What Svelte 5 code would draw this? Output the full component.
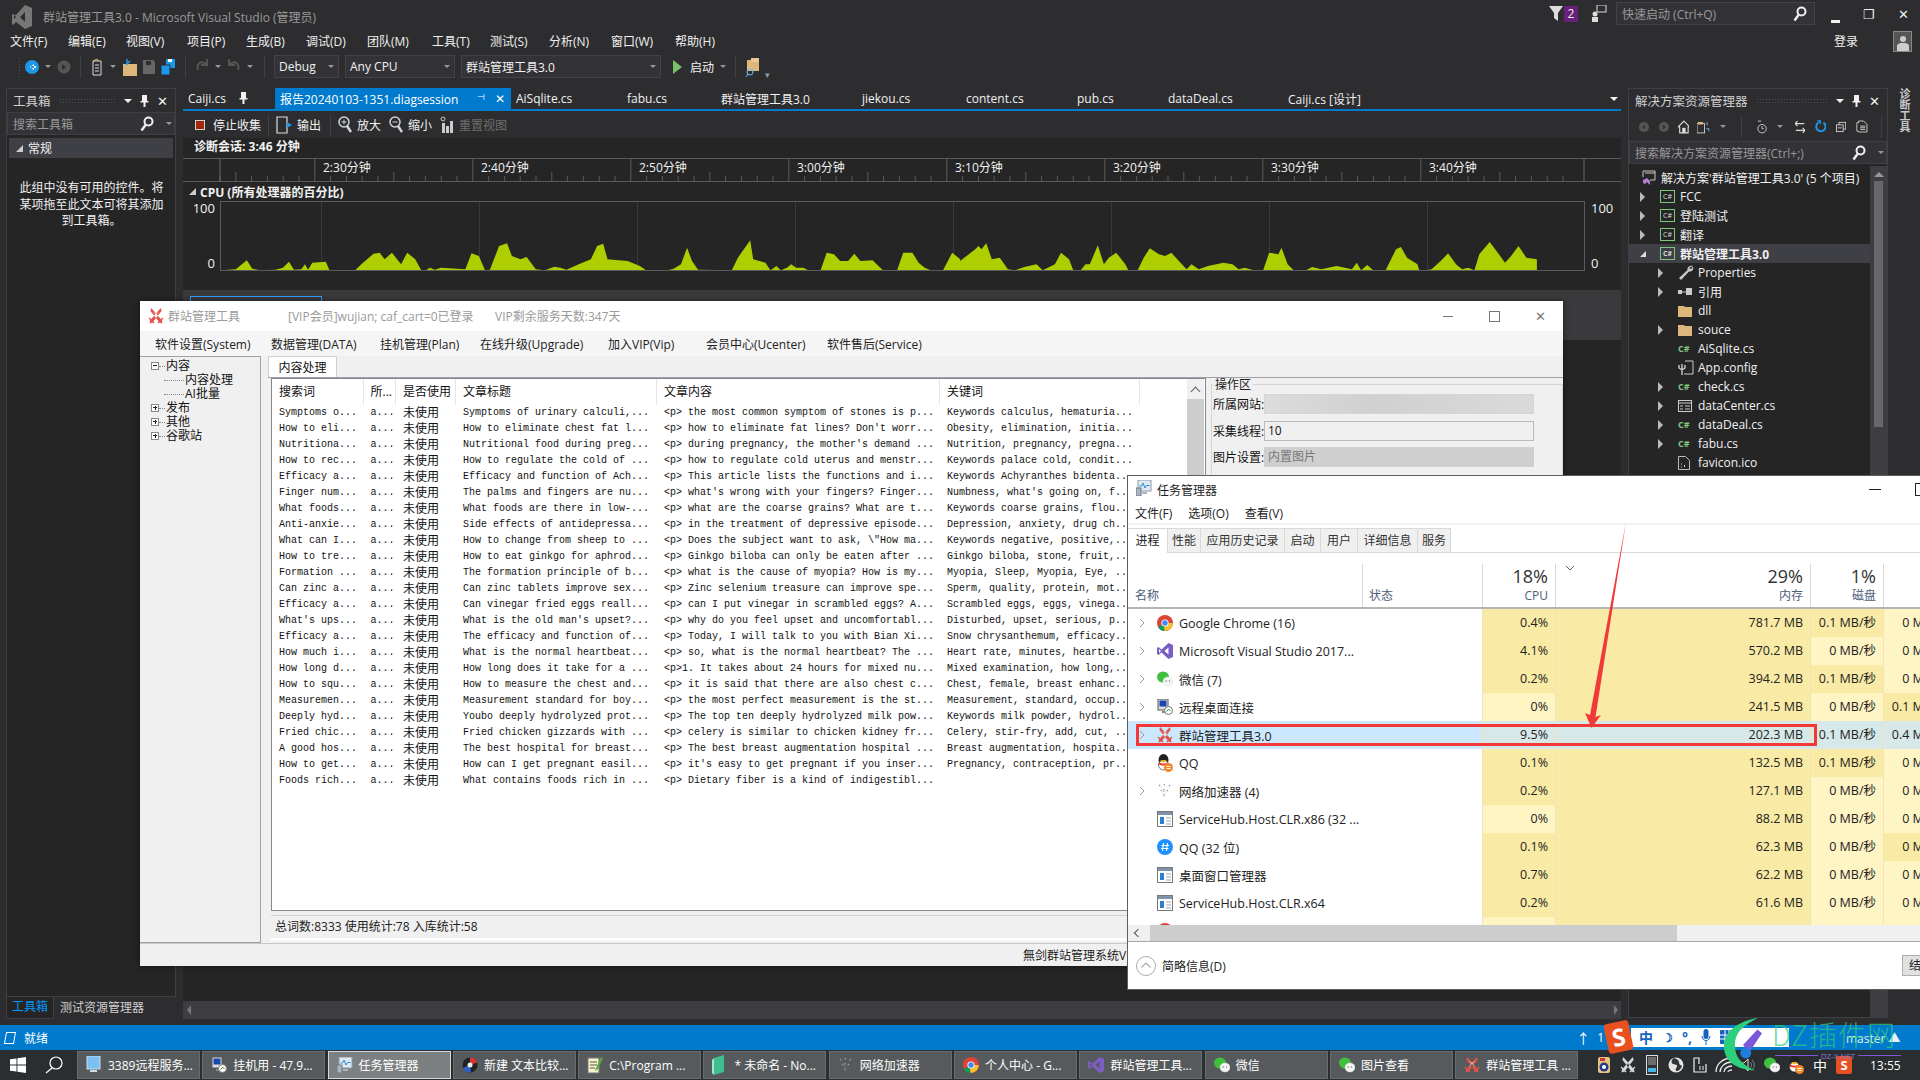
<script>
  const menus = [['文件(F)',58],['编辑(E)',58],['视图(V)',61],['项目(P)',59],['生成(B)',60],['调试(D)',61],['团队(M)',65],['工具(T)',58],['测试(S)',59],['分析(N)',62],['窗口(W)',64],['帮助(H)',60]];
  const docTabs = [['Caiji.cs',92,'pin'],['报告20240103-1351.diagsession',236,'active'],['AiSqlite.cs',111],['fabu.cs',94],['群站管理工具3.0',141],['jiekou.cs',104],['content.cs',111],['pub.cs',91],['dataDeal.cs',120],['Caiji.cs [设计]',140]];
  const times = ['2:30','2:40','2:50','3:00','3:10','3:20','3:30','3:40'];
  const ticks = Array.from({length: 86}, (_, i) => i);

  // chart outline, read off the reference in zoomed coordinates
  const cpuA = [360,808,385,805,403,778,412,803,425,808,450,806,462,800,472,782,480,806,492,805,498,790,503,806,510,785,532,782,538,808,580,808,590,790,610,758,620,755,628,775,640,755,655,790,665,755,678,775,688,808,695,808,702,800,710,806,720,800,760,805,770,757,782,765,792,808,800,806,815,735,828,727,836,765,850,775,860,768,875,805,890,808,905,797,915,800,925,806,945,790,965,775,975,735,985,728,992,775,1010,778,1025,780,1045,795,1055,808,1090,808,1100,803,1112,790,1122,740,1130,780,1140,806,1195,808,1205,770,1225,718,1230,775,1250,785,1258,808,1268,795,1275,808,1285,800,1292,790,1300,800,1312,800,1320,808,1340,808,1350,755,1362,760,1372,780,1385,780,1395,758,1405,780,1425,778,1442,808,1465,808,1475,755,1490,755,1500,785,1510,800,1520,808,1540,808,1555,755,1568,775];
  const cpuB = [0,780,25,745,30,735,35,745,43,727,52,775,65,770,78,805,90,808,105,798,125,790,135,808,155,790,165,755,178,775,185,808,197,808,205,790,212,790,225,733,235,790,243,770,255,755,270,790,275,808,290,808,300,770,310,742,325,760,335,765,345,755,360,785,370,805,378,790,390,805,405,795,430,785,445,790,455,805,465,800,480,808,495,808,505,755,520,760,525,740,535,790,545,808,565,808,575,798,590,805,615,795,640,805,648,785,655,808,665,792,675,808,695,808,712,745,720,738,730,770,747,790,750,808,760,808,770,805,785,780,797,757,810,790,820,805,830,800,840,808,848,760,865,723,880,760,890,785,900,765,912,735,925,770,942,775,942,808];
  let pts = [];
  for (let i = 0; i < cpuA.length; i += 2) pts.push((cpuA[i] / 1.633).toFixed(1) + ',' + (cpuA[i + 1] / 3 - 201).toFixed(1));
  for (let i = 0; i < cpuB.length; i += 2) pts.push((960 + cpuB[i] / 1.633).toFixed(1) + ',' + (cpuB[i + 1] / 3 - 201).toFixed(1));
  const cpuPoints = '220,69 ' + pts.join(' ');

  const solution = [
    {n:'FCC',a:1,i:'proj',d:0},{n:'登陆测试',a:1,i:'proj',d:0},{n:'翻译',a:1,i:'proj',d:0},
    {n:'群站管理工具3.0',a:2,i:'proj',d:0,sel:1},
    {n:'Properties',a:1,i:'wrench',d:1},{n:'引用',a:1,i:'ref',d:1},{n:'dll',a:0,i:'folder',d:1},{n:'souce',a:1,i:'folder',d:1},
    {n:'AiSqlite.cs',a:0,i:'cs',d:1},{n:'App.config',a:0,i:'cfg',d:1},{n:'check.cs',a:1,i:'cs',d:1},{n:'dataCenter.cs',a:1,i:'form',d:1},
    {n:'dataDeal.cs',a:1,i:'cs',d:1},{n:'fabu.cs',a:1,i:'cs',d:1},{n:'favicon.ico',a:0,i:'ico',d:1}
  ];

  const toolMenu = [['软件设置(System)',116],['数据管理(DATA)',109],['挂机管理(Plan)',100],['在线升级(Upgrade)',128],['加入VIP(Vip)',98],['会员中心(Ucenter)',121],['软件售后(Service)',120]];
  const tree = [['minus','内容',0],['','内容处理',1],['','AI批量',1],['plus','发布',0],['plus','其他',0],['plus','谷歌站',0]];
  const rows = [
    ['Symptoms o...','Symptoms of urinary calculi,...','<p> the most common symptom of stones is p...','Keywords calculus, hematuria...'],
    ['How to eli...','How to eliminate chest fat l...',"<p> how to eliminate fat lines? Don't worr...",'Obesity, elimination, initia...'],
    ['Nutritiona...','Nutritional food during preg...',"<p> during pregnancy, the mother's demand ...",'Nutrition, pregnancy, pregna...'],
    ['How to rec...','How to regulate the cold of ...','<p> how to regulate cold uterus and menstr...','Keywords palace cold, condit...'],
    ['Efficacy a...','Efficacy and function of Ach...','<p> This article lists the functions and i...','Keywords Achyranthes bidenta...'],
    ['Finger num...','The palms and fingers are nu...',"<p> what's wrong with your fingers? Finger...","Numbness, what's going on, f..."],
    ['What foods...','What foods are there in low-...','<p> what are the coarse grains? What are t...','Keywords coarse grains, flou...'],
    ['Anti-anxie...','Side effects of antidepressa...','<p> in the treatment of depressive episode...','Depression, anxiety, drug ch...'],
    ['What can I...','How to change from sheep to ...','<p> Does the subject want to ask, \\"How ma...','Keywords negative, positive,...'],
    ['How to tre...','How to eat ginkgo for aphrod...','<p> Ginkgo biloba can only be eaten after ...','Ginkgo biloba, stone, fruit,...'],
    ['Formation ...','The formation principle of b...','<p> what is the cause of myopia? How is my...','Myopia, Sleep, Myopia, Eye, ...'],
    ['Can zinc a...','Can zinc tablets improve sex...','<p> Zinc selenium treasure can improve spe...','Sperm, quality, protein, mot...'],
    ['Efficacy a...','Can vinegar fried eggs reall...','<p> can I put vinegar in scrambled eggs? A...','Scrambled eggs, eggs, vinega...'],
    ["What's ups...","What is the old man's upset?...",'<p> why do you feel upset and uncomfortabl...','Disturbed, upset, serious, p...'],
    ['Efficacy a...','The efficacy and function of...','<p> Today, I will talk to you with Bian Xi...','Snow chrysanthemum, efficacy...'],
    ['How much i...','What is the normal heartbeat...','<p> so, what is the normal heartbeat? The ...','Heart rate, minutes, heartbe...'],
    ['How long d...','How long does it take for a ...','<p>1. It takes about 24 hours for mixed nu...','Mixed examination, how long,...'],
    ['How to squ...','How to measure the chest and...','<p> it is said that there are also chest c...','Chest, female, breast enhanc...'],
    ['Measuremen...','Measurement standard for boy...','<p> the most perfect measurement is the st...','Measurement, standard, occup...'],
    ['Deeply hyd...','Youbo deeply hydrolyzed prot...','<p> The top ten deeply hydrolyzed milk pow...','Keywords milk powder, hydrol...'],
    ['Fried chic...','Fried chicken gizzards with ...','<p> celery is similar to chicken kidney fr...','Celery, stir-fry, add, cut, ...'],
    ['A good hos...','The best hospital for breast...','<p> The best breast augmentation hospital ...','Breast augmentation, hospita...'],
    ['How to get...','How can I get pregnant easil...',"<p> it's easy to get pregnant if you inser...",'Pregnancy, contraception, pr...'],
    ['Foods rich...','What contains foods rich in ...','<p> Dietary fiber is a kind of indigestibl...','']
  ];

  const tmTabs = [['进程',40,'on'],['性能',33],['应用历史记录',84],['启动',36],['用户',37],['详细信息',60],['服务',33]];
  // name, expandable, icon, cpu, mem, disk, net, then which heat cells are the darker shade
  const procs = [
    ['Google Chrome (16)',1,'chrome','0.4%','781.7 MB','0.1 MB/秒','0 MB/秒',1,1,0],
    ['Microsoft Visual Studio 2017...',1,'vs','4.1%','570.2 MB','0 MB/秒','0 MB/秒',1,0,0],
    ['微信 (7)',1,'wechat','0.2%','394.2 MB','0.1 MB/秒','0 MB/秒',1,1,0],
    ['远程桌面连接',1,'rdp','0%','241.5 MB','0 MB/秒','0.1 MB/秒',0,0,1],
    ['群站管理工具3.0',1,'swords','9.5%','202.3 MB','0.1 MB/秒','0.4 MB/秒',1,1,1,'sel'],
    ['QQ',0,'qq','0.1%','132.5 MB','0.1 MB/秒','0 MB/秒',1,1,0],
    ['网络加速器 (4)',1,'net','0.2%','127.1 MB','0 MB/秒','0 MB/秒',1,0,0],
    ['ServiceHub.Host.CLR.x86 (32 ...',0,'app','0%','88.2 MB','0 MB/秒','0 MB/秒',0,0,0],
    ['QQ (32 位)',0,'hash','0.1%','62.3 MB','0 MB/秒','0 MB/秒',1,0,1],
    ['桌面窗口管理器',0,'app','0.7%','62.2 MB','0 MB/秒','0 MB/秒',1,0,0],
    ['ServiceHub.Host.CLR.x64',0,'app','0.2%','61.6 MB','0 MB/秒','0 MB/秒',1,0,0],
    ['',0,'red','','','','',0,0,0]
  ];

  const taskItems = [
    ['3389远程服务...','screen'],['挂机用 - 47.9...','rdp'],['任务管理器','tm','on'],['新建 文本比较...','diff'],['C:\\Program ...','npp'],['* 未命名 - No...','note'],['网络加速器','net'],
    ['个人中心 - G...','chrome'],['群站管理工具...','vs'],['微信','wechat'],['图片查看','wechat'],['群站管理工具 ...','swords']
  ];
  const trayIcons = ['guard','swordsW','phone','globe','note2','wifi','sound','wechat','qq','zh','sogou'];
</script>

{#snippet icon(name)}
  {#if name === 'chrome'}
    <svg viewBox="0 0 16 16" width="16" height="16"><circle cx="8" cy="8" r="8" fill="#db4437"/><path d="M8 8 1 12a8 8 0 0 0 7 4l3.500-6z" fill="#0f9d58"/><path d="M8 8h7.800A8 8 0 0 1 8 16l-1-2z" fill="#fbc02d"/><circle cx="8" cy="8" r="3.600" fill="#fff"/><circle cx="8" cy="8" r="2.700" fill="#4285f4"/></svg>
  {:else if name === 'vs'}
    <svg viewBox="0 0 16 16" width="16" height="16"><path d="M11.500 0 16 2v12l-4.500 2L4.500 9.500 1.500 12 0 11V5l1.500-1 3 2.500zM11.500 4.500 7.500 8l4 3.500zM2 6v4l2-2z" fill="#7b5fc4"/></svg>
  {:else if name === 'wechat'}
    <svg viewBox="0 0 16 16" width="16" height="16"><ellipse cx="6" cy="6" rx="6" ry="5.500" fill="#3ec03e"/><ellipse cx="11" cy="10.500" rx="5" ry="4.500" fill="#f4f4f4" stroke="#ddd" stroke-width=".5"/><circle cx="9.300" cy="10" r=".8" fill="#888"/><circle cx="12.500" cy="10" r=".8" fill="#888"/></svg>
  {:else if name === 'rdp'}
    <svg viewBox="0 0 16 16" width="16" height="16"><rect x="1" y="0" width="10" height="11" fill="#ddd" stroke="#555"/><rect x="2.500" y="1.500" width="7" height="6" fill="#1746b0"/><rect x="5" y="12" width="5" height="2" fill="#888"/><circle cx="11.500" cy="11.500" r="4" fill="#fff" stroke="#777"/><path d="M9.500 12.500l2-2 2 1" stroke="#2a8a2a" fill="none"/></svg>
  {:else if name === 'swords' || name === 'swordsW'}
    <svg viewBox="0 0 16 16" width="16" height="16"><path d="M3 0 5 2l9 10.500.5 3-3-1L2.500 3zM13 0l-2 2L2 12.500 1.500 15.500l3-1 9-11.500z" fill={name === 'swords' ? '#e0524a' : '#d8d8d8'}/><path d="M1 10l5 5M15 10l-5 5" stroke={name === 'swords' ? '#e0524a' : '#d8d8d8'} stroke-width="1.400"/><path d="M6 4.500 10 8.500M10 4.500 6 8.500" stroke="#fff" stroke-width=".7"/></svg>
  {:else if name === 'qq'}
    <svg viewBox="0 0 16 18" width="16" height="18"><ellipse cx="6.500" cy="6" rx="5" ry="6" fill="#222"/><ellipse cx="6.500" cy="11" rx="5" ry="5" fill="#fff" stroke="#222" stroke-width=".6"/><path d="M2 8.500c3 1.500 6 1.500 9 0l.5 2c-3 1.200-7 1.200-10 0z" fill="#e33"/><path d="M3 6.800 6.500 8.500 10 6.800 6.500 6z" fill="#f5b400"/><circle cx="11.500" cy="13.500" r="4.500" fill="#f58a29"/><path d="M9.500 12.500h4M9.500 14.500h4" stroke="#fff"/></svg>
  {:else if name === 'net'}
    <svg viewBox="0 0 16 16" width="16" height="16"><path d="M2 2l2 2M7 1l1 2M13 2l-2 2M4 7l2 2M11 7 9 9M7 6v3M7 11v3" stroke="#9a9aa8" stroke-width="1.400" stroke-dasharray="1.500 1"/></svg>
  {:else if name === 'app'}
    <svg viewBox="0 0 16 16" width="16" height="16"><rect x=".5" y=".5" width="15" height="15" fill="#fff" stroke="#777"/><rect x="1" y="1" width="14" height="3" fill="#7f94a8"/><rect x="3" y="6" width="4" height="7" fill="#2a7fd0"/><path d="M9 7h5M9 10h5M9 13h5" stroke="#9aa"/></svg>
  {:else if name === 'hash'}
    <svg viewBox="0 0 16 16" width="16" height="16"><circle cx="8" cy="8" r="8" fill="#1e90ff"/><path d="M6.500 4 5.500 12M10.500 4l-1 8M4.500 6.500h7.500M4 9.500h7.500" stroke="#fff" stroke-width="1.100"/></svg>
  {:else if name === 'red'}
    <svg viewBox="0 0 16 16" width="16" height="16"><circle cx="8" cy="8" r="8" fill="#e53935"/></svg>
  {:else if name === 'screen'}
    <svg viewBox="0 0 16 18" width="16" height="18"><rect x="1" y="0" width="13" height="13" fill="#7ac0f0" stroke="#cde"/><rect x="4" y="14" width="7" height="2" fill="#cde"/></svg>
  {:else if name === 'tm'}
    <svg viewBox="0 0 16 16" width="16" height="16"><rect x="2" y="0" width="13" height="11" fill="#dfe8f0" stroke="#8a9aa8"/><path d="M3.500 6h2l1.500-3 2 5 1.500-2.500h3" stroke="#2a8ad0" fill="none"/><rect x="0" y="8" width="5" height="8" fill="#a8b4be" stroke="#778"/><rect x="6" y="12" width="5" height="2" fill="#a8b4be"/></svg>
  {:else if name === 'diff'}
    <svg viewBox="0 0 16 16" width="16" height="16"><circle cx="8" cy="8" r="7.500" fill="#222"/><path d="M8 .5a7.500 7.500 0 0 1 7 5L8 8z" fill="#d33"/><path d="M1 11a7.500 7.500 0 0 0 8 4.400L8 8z" fill="#2a62c8"/><circle cx="8" cy="8" r="2.500" fill="#eee"/></svg>
  {:else if name === 'npp'}
    <svg viewBox="0 0 16 18" width="16" height="18"><rect x="1" y="2" width="11" height="15" fill="#f8f3c8" stroke="#777"/><path d="M3 6h7M3 9h7M3 12h5" stroke="#555"/><path d="M14 1 9 12l-1 3 3-2 5-11z" fill="#5aa83a"/></svg>
  {:else if name === 'note'}
    <svg viewBox="0 0 14 20" width="14" height="20"><path d="M2 3 12 0v17L2 20z" fill="#3fbf8f"/><path d="M2 3 0 5v13l2 2z" fill="#a6e6cc"/></svg>
  {:else if name === 'guard'}
    <svg viewBox="0 0 16 20" width="16" height="20"><rect x="2" y="2" width="12" height="16" rx="2" fill="#e8c480"/><circle cx="8" cy="12" r="4.500" fill="#263a8a"/><circle cx="8" cy="12" r="2" fill="#fff"/><rect x="4" y="3" width="5" height="3" fill="#c33"/></svg>
  {:else if name === 'phone'}
    <svg viewBox="0 0 12 20" width="12" height="20"><rect x=".5" y=".5" width="11" height="19" fill="#333" stroke="#ddd"/><path d="M2 3h8M2 5h8M2 7h8M2 9h8" stroke="#aaa"/><rect x="2" y="13" width="8" height="4" fill="#49b6e8"/></svg>
  {:else if name === 'globe'}
    <svg viewBox="0 0 16 16" width="16" height="16"><circle cx="8" cy="8" r="7.500" fill="#e4e4e4"/><path d="M6 1C3 3 3 6 5 7s4 0 4 2-2 2-1 5c3 0 5-2 6-5-2-1-3-2-3-4S9 2 6 1z" fill="#333"/></svg>
  {:else if name === 'note2'}
    <svg viewBox="0 0 16 16" width="16" height="16"><path d="M2 1v14h12V7M2 1h5v6" fill="none" stroke="#eee" stroke-width="1.200"/><path d="M8 9v4M11 9v4" stroke="#eee"/></svg>
  {:else if name === 'wifi'}
    <svg viewBox="0 0 18 18" width="18" height="18"><path d="M1 16C1 8 8 2 17 2M5 16c0-5 5-10 12-10M9 16c0-3 3-6 8-6M13 16c0-1 2-2 4-2" fill="none" stroke="#e8e8e8" stroke-width="1.300"/></svg>
  {:else if name === 'sound'}
    <svg viewBox="0 0 16 16" width="16" height="16"><path d="M1 6h3l4-4v12l-4-4H1z" fill="none" stroke="#ddd"/><path d="M10 5c2 2 2 4 0 6M12 3c3 3 3 7 0 10" fill="none" stroke="#888"/></svg>
  {:else if name === 'zh'}
    <span class="tray-zh">中</span>
  {:else if name === 'sogou'}
    <span class="tray-s">S</span>
  {/if}
{/snippet}

{#snippet search(color)}
  <svg viewBox="0 0 14 16" width="14" height="16"><circle cx="8.500" cy="5.500" r="4" fill="none" stroke={color} stroke-width="2"/><path d="M5.500 9 1.500 14.500" stroke={color} stroke-width="2.400"/></svg>
{/snippet}

{#snippet pin(c)}
  <svg viewBox="0 0 9 14" width="9" height="14"><path d="M2 1h5v6h1.500v1.500h-3V13h-2V8.500h-3V7H2z" fill={c}/></svg>
{/snippet}

{#snippet panelHead(title)}
  <div class="panel-head">
    <span class="panel-title">{title}</span>
    <span class="grip"></span>
    <span class="dn"></span>
    {@render pin('#f1f1f1')}
    <span class="panel-x">✕</span>
  </div>
{/snippet}

{#snippet projIcon(kind)}
  {#if kind === 'proj'}
    <span class="proj">C#</span>
  {:else if kind === 'cs'}
    <span class="cs">C#</span>
  {:else if kind === 'wrench'}
    <svg viewBox="0 0 16 16" width="16" height="16"><path d="M15 1c-3-1-6 1-5.500 4L1 13l2 2 8-8.500c3 .5 5-2 4-5L13 4l-2-1z" fill="#c8c8c8"/></svg>
  {:else if kind === 'ref'}
    <svg viewBox="0 0 14 14" width="14" height="14"><rect x="0" y="5" width="4" height="4" fill="#ccc"/><rect x="8" y="3" width="6" height="7" fill="#ccc"/><path d="M4 7h4" stroke="#ccc"/></svg>
  {:else if kind === 'folder'}
    <svg viewBox="0 0 14 12" width="14" height="12"><path d="M0 1h6l1 1h7v10H0z" fill="#dcb67a"/></svg>
  {:else if kind === 'cfg'}
    <svg viewBox="0 0 16 16" width="16" height="16"><path d="M7 1h8v13H6" fill="none" stroke="#ccc"/><path d="M4 4v5M1 5v3l3 2 3-2V5M4 10v5" fill="none" stroke="#ccc" stroke-width="1.400"/></svg>
  {:else if kind === 'form'}
    <svg viewBox="0 0 14 12" width="14" height="12"><rect x=".5" y=".5" width="13" height="11" fill="none" stroke="#ccc"/><path d="M0 3h14M2 6h3M7 6h5M2 9h3M7 9h5" stroke="#ccc"/></svg>
  {:else if kind === 'ico'}
    <svg viewBox="0 0 12 14" width="12" height="14"><path d="M.5.5h7l4 4v9H.5z" fill="none" stroke="#bbb"/><path d="M3 8h1M3 11h1M6 9l1 1-1 1" stroke="#ccc"/></svg>
  {/if}
{/snippet}

<div class="desktop">
  <div class="vs">
    <header class="titlebar">
      <svg class="vs-logo" viewBox="0 0 20 24" width="20" height="24"><path d="M13 0 20 3v18l-7 3-9-7-3 3-1-1V9l4 1zM13 7 8 12l5 5zM2 10v4l2-2z" fill="#777"/></svg>
      <span class="title-text">群站管理工具3.0 - Microsoft Visual Studio (管理员)</span>
      <span class="spacer"></span>
      <div class="title-right">
        <svg viewBox="0 0 14 16" width="14" height="16"><path d="M0 0h14L9 7v8L5 12V7z" fill="#ddd"/></svg>
        <span class="badge">2</span>
        <svg class="feedback" viewBox="0 0 16 18" width="16" height="18"><rect x="6" y="0" width="9" height="7" fill="none" stroke="#ddd"/><circle cx="4" cy="9" r="2.500" fill="#ddd"/><rect x="1" y="12" width="6" height="5" fill="#ddd"/></svg>
        <div class="quick">快速启动 (Ctrl+Q){@render search('#f1f1f1')}</div>
        <span class="win-ctl"><i class="c-min"></i></span>
        <span class="win-ctl">❐</span>
        <span class="win-ctl">✕</span>
      </div>
    </header>

    <nav class="menubar">
      {#each menus as m}<span style="width:{m[1]}px">{m[0]}</span>{/each}
      <span class="spacer"></span>
      <span class="login">登录</span>
      <span class="avatar"><svg viewBox="0 0 12 16" width="12" height="16"><circle cx="6" cy="4" r="3" fill="#ccc"/><path d="M0 16V10l3-2h6l3 2v6z" fill="#ccc"/></svg></span>
    </nav>

    <div class="toolbar">
      <span class="grip-v"></span>
      <svg class="t1" viewBox="0 0 14 16" width="14" height="16"><circle cx="7" cy="8" r="7" fill="#1c97ea"/><path d="M9 5 5 8l4 3zM5 7h6v2H5z" fill="#fff"/></svg>
      <span class="dn-s"></span>
      <svg viewBox="0 0 14 16" width="14" height="16"><circle cx="7" cy="8" r="6.500" fill="#555"/><path d="M5 5l4 3-4 3z" fill="#2d2d30"/></svg>
      <span class="t-sep"></span>
      <svg viewBox="0 0 14 18" width="14" height="18"><path d="M3 3h8v14H3z" fill="none" stroke="#ddd"/><path d="M5 7h4M5 10h4M5 13h4" stroke="#ddd"/><path d="M3 3 7 1l2 2" stroke="#e8b06a" fill="none"/></svg>
      <span class="dn-s"></span>
      <svg viewBox="0 0 16 18" width="16" height="18"><path d="M1 6h14v12H1z" fill="#dcb67a"/><path d="M5 1v5l3-3" stroke="#1c97ea" fill="none" stroke-width="1.500"/></svg>
      <svg viewBox="0 0 14 16" width="14" height="16"><path d="M1 1h10l2 2v12H1z" fill="#666"/><rect x="4" y="2" width="5" height="4" fill="#2d2d30"/></svg>
      <svg viewBox="0 0 16 18" width="16" height="18"><path d="M6 1h9v9H6z" fill="#1c97ea"/><path d="M1 7h9v10H1z" fill="#1c97ea" stroke="#2d2d30"/><rect x="8" y="1" width="4" height="3" fill="#fff"/></svg>
      <span class="t-sep"></span>
      <svg viewBox="0 0 14 18" width="14" height="18"><path d="M3 12C1 6 6 2 11 6M12 1v6H6" fill="none" stroke="#555" stroke-width="2"/></svg>
      <span class="dn-s"></span>
      <svg viewBox="0 0 14 18" width="14" height="18"><path d="M11 12C13 6 8 2 3 6M2 1v6h6" fill="none" stroke="#555" stroke-width="2"/></svg>
      <span class="dn-s"></span>
      <span class="t-sep"></span>
      <div class="combo c-debug">Debug<i></i></div>
      <div class="combo c-cpu">Any CPU<i></i></div>
      <div class="combo c-proj">群站管理工具3.0<i></i></div>
      <span class="play"></span>
      <span class="start">启动</span>
      <span class="dn-s"></span>
      <span class="t-sep t-sep2"></span>
      <svg viewBox="0 0 16 20" width="16" height="20"><path d="M2 3h12v11H2z" fill="#dcb67a"/><path d="M6 1h8v4H6z" fill="#e8c896"/><circle cx="5" cy="15" r="3" fill="none" stroke="#75beff"/><path d="M3 17l-2 3" stroke="#75beff"/></svg>
      <span class="over">▾</span>
    </div>

    <div class="dock">
      <div class="left-col">
        <aside class="toolbox">
          {@render panelHead('工具箱')}
          <div class="search"><span>搜索工具箱</span><b>{@render search('#f1f1f1')}</b><i class="dn-s"></i></div>
          <div class="general"><span class="tri"></span>常规</div>
          <p class="empty">此组中没有可用的控件。将某项拖至此文本可将其添加到工具箱。</p>
        </aside>
        <div class="bottom-tabs"><span class="on">工具箱</span><span>测试资源管理器</span></div>
      </div>

      <main class="center">
        <div class="doc-tabs">
          {#each docTabs as t}
            <div class="doc-tab" class:active={t[2] === 'active'} style="width:{t[1]}px">
              <span>{t[0]}</span>
              {#if t[2] === 'pin'}<em class="tab-pin">{@render pin('#f1f1f1')}</em>{/if}
              {#if t[2] === 'active'}<em class="tab-act"><span class="mini-pin">⊣</span><span>✕</span></em>{/if}
            </div>
          {/each}
          <span class="spacer"></span>
          <span class="dn tab-dn"></span>
        </div>
        <div class="diag-bar">
          <span class="stop"></span><span>停止收集</span>
          <span class="t-sep"></span>
          <svg viewBox="0 0 16 18" width="16" height="18"><path d="M1 1h10v16H1z" fill="none" stroke="#ddd" stroke-width="1.200"/><path d="M4 9h7V6l5 3-5 3V9" fill="#1c97ea"/></svg><span class="mr">输出</span>
          <span class="t-sep"></span>
          <svg viewBox="0 0 14 18" width="14" height="18"><circle cx="6" cy="6" r="5" fill="none" stroke="#cfd4da" stroke-width="1.500"/><path d="M9 10l4 6" stroke="#cfd4da" stroke-width="2.500"/><path d="M3.500 6h5M6 3.500v5" stroke="#cfd4da"/></svg><span class="mr2">放大</span>
          <svg viewBox="0 0 14 18" width="14" height="18"><circle cx="6" cy="6" r="5" fill="none" stroke="#cfd4da" stroke-width="1.500"/><path d="M9 10l4 6" stroke="#cfd4da" stroke-width="2.500"/><path d="M3.500 6h5" stroke="#cfd4da"/></svg><span class="mr2">缩小</span>
          <svg viewBox="0 0 14 18" width="14" height="18"><circle cx="3" cy="3" r="2" fill="none" stroke="#ccc"/><rect x="2" y="7" width="3" height="10" fill="#ccc"/><rect x="6" y="10" width="3" height="7" fill="#ccc"/><rect x="10" y="5" width="3" height="12" fill="#ccc"/></svg><span class="disabled">重置视图</span>
        </div>
        <div class="session">诊断会话: 3:46 分钟</div>
        <div class="ruler">
          <svg class="ruler-ticks" width="1438" height="23">
            {#each ticks as k}
              <line x1={37 + k * 15.8} x2={37 + k * 15.8} y1={k % 10 === 6 ? 0 : k % 5 === 1 ? 13 : 17} y2="23" stroke="#5a5a5a"/>
            {/each}
            <line x1="37" x2="37" y1="0" y2="23" stroke="#6a6a6a"/>
            <line x1="1401" x2="1401" y1="0" y2="23" stroke="#6a6a6a"/>
          </svg>
          {#each times as t, i}<span class="time" style="left:{140 + i * 158}px">{t}分钟</span>{/each}
        </div>
        <div class="cpu-head"><span class="tri"></span>CPU (所有处理器的百分比)</div>
        <div class="chart-row">
          <div class="axis left"><span>100</span><span>0</span></div>
          <div class="plot">
            <svg width="1364" height="69" viewBox="220 0 1364 69">
              {#each times as _, i}<line x1={321.500 + i * 158} x2={321.500 + i * 158} y1="0" y2="69" stroke="#3a3a3c"/>{/each}
              <polygon points={cpuPoints} fill="#aece00"/>
              <line x1="220" x2="1537" y1="68.500" y2="68.500" stroke="#6f7d3a"/>
            </svg>
          </div>
          <div class="axis right"><span>100</span><span>0</span></div>
        </div>
        <div class="chart-gap"></div>
        <div class="graph-tabs"><span class="graph-tab"></span></div>
        <div class="doc-fill"></div>
        <div class="doc-scroll"><span class="arr-l"></span><span class="spacer"></span><span class="arr-r"></span></div>
      </main>

      <aside class="explorer">
        {@render panelHead('解决方案资源管理器')}
        <div class="ex-tools">
          <svg viewBox="0 0 14 14" width="14" height="14"><circle cx="7" cy="7" r="6" fill="#555"/><path d="M8 4 5 7l3 3z" fill="#2d2d30"/></svg>
          <svg viewBox="0 0 14 14" width="14" height="14"><circle cx="7" cy="7" r="6" fill="#555"/><path d="M6 4l3 3-3 3z" fill="#2d2d30"/></svg>
          <svg viewBox="0 0 14 14" width="14" height="14"><path d="M7 0 14 7h-2v7H2V7H0z" fill="none" stroke="#ddd" stroke-width="1.300"/><rect x="5" y="8" width="4" height="6" fill="#ddd"/></svg>
          <svg viewBox="0 0 15 14" width="15" height="14"><rect x="0" y="3" width="9" height="11" fill="none" stroke="#ddd"/><rect x="1" y="1" width="6" height="3" fill="#dcb67a"/><path d="M12 1v4M11 9h3v3" stroke="#75beff" fill="none"/></svg>
          <span class="dn-s"></span>
          <span class="t-sep"></span>
          <svg class="gap" viewBox="0 0 12 16" width="12" height="16"><circle cx="6" cy="10" r="5" fill="none" stroke="#ddd"/><path d="M6 7v3h2M1 1h4" stroke="#ddd" fill="none"/></svg>
          <span class="dn-s"></span>
          <svg class="gap" viewBox="0 0 12 14" width="12" height="14"><path d="M3 0 0 3l3 3M0 3h11M9 8l3 3-3 3M12 11H1" fill="none" stroke="#ddd" stroke-width="1.400"/></svg>
          <svg class="gap" viewBox="0 0 13 15" width="13" height="15"><path d="M10 3a5.500 5.500 0 1 1-6 0" fill="none" stroke="#1c97ea" stroke-width="2.400"/><path d="M2 0h5v5" fill="#1c97ea"/></svg>
          <svg class="gap" viewBox="0 0 12 12" width="12" height="12"><rect x="3.500" y=".5" width="8" height="8" fill="none" stroke="#ddd"/><rect x=".5" y="3.500" width="8" height="8" fill="#2d2d30" stroke="#ddd"/><path d="M2 7h5" stroke="#ddd"/></svg>
          <svg class="gap" viewBox="0 0 14 15" width="14" height="15"><path d="M1 3h2V1h6l4 4v9H3v-1H1z" fill="none" stroke="#ddd"/><path d="M5 7h6M5 9h6M5 11h6" stroke="#ddd"/></svg>
          <span class="t-sep"></span>
        </div>
        <div class="search ex-search"><span>搜索解决方案资源管理器(Ctrl+;)</span><b>{@render search('#f1f1f1')}</b><i class="dn-s"></i></div>
        <div class="ex-body">
          <div class="ex-tree">
            <div class="ex-row root">
              <svg viewBox="0 0 14 16" width="14" height="16"><path d="M1 1h12v9H8M1 1v6M3 3h10" fill="none" stroke="#ccc"/><path d="M5 8l3 3v4l-3-3-2 2-2-1v-3l2-1z" fill="#b180d7"/></svg>
              解决方案'群站管理工具3.0' (5 个项目)
            </div>
            {#each solution as s}
              <div class="ex-row" class:sel={s.sel} class:deep={s.d === 1}>
                <span class="arrow">{#if s.a === 1}<i class="open"></i>{:else if s.a === 2}<i class="down"></i>{/if}</span>
                <span class="ex-ico">{@render projIcon(s.i)}</span>
                <span class="ex-name">{s.n}</span>
              </div>
            {/each}
          </div>
          <div class="ex-sb"><span class="up"></span><span class="thumb"></span></div>
        </div>
      </aside>

      <div class="strip"><span>诊断工具</span></div>
    </div>

    <footer class="statusbar">
      <span class="status-box"></span><span>就绪</span>
      <span class="spacer"></span>
      <span class="up-arrow">↑</span><span class="stat-num">1</span>
      <span class="master">master ▲</span>
    </footer>
  </div>

  <div class="taskbar">
    <svg class="winlogo" viewBox="0 0 16 16" width="16" height="16"><path d="M0 2.300 6.500 1.400V7.600H0zM7.400 1.300 16 0V7.600H7.400zM0 8.400h6.500v6.200L0 13.700zM7.400 8.400H16V16L7.400 14.700z" fill="#fff"/></svg>
    <svg class="tb-search" viewBox="0 0 18 18" width="18" height="18"><circle cx="11" cy="7" r="6" fill="none" stroke="#fff" stroke-width="1.200"/><path d="M7 12 1 17" stroke="#fff" stroke-width="1.200"/></svg>
    {#each taskItems as t}
      <div class="task-btn" class:on={t[2] === 'on'}>
        <span class="task-ico">{@render icon(t[1])}</span>
        <span>{t[0]}</span>
      </div>
    {/each}
    <div class="tray">
      {#each trayIcons as t}<span class="tray-i">{@render icon(t)}</span>{/each}
      <span class="clock">13:55</span>
    </div>
  </div>

  <!-- floating window: group manager -->
  <section class="tool-win">
    <div class="tw-title">
      <span class="tw-icon">{@render icon('swords')}</span>
      <span class="tw-name">群站管理工具</span>
      <span class="tw-vip">[VIP会员]wujian; caf_cart=0已登录</span>
      <span class="tw-days">VIP剩余服务天数:347天</span>
      <span class="spacer"></span>
      <span class="tw-ctl min"></span><span class="tw-ctl max"></span><span class="tw-ctl x">✕</span>
    </div>
    <div class="tw-menu">
      {#each toolMenu as m}<span style="width:{m[1]}px">{m[0]}</span>{/each}
    </div>
    <div class="tw-body">
      <div class="tree">
        {#each tree as n}
          <div class="tree-row" class:child={n[2]}>
            {#if n[0]}<i class="box {n[0]}"></i><b class="dot"></b>{/if}
            {#if n[2]}<b class="dot long"></b>{/if}
            <span>{n[1]}</span>
          </div>
        {/each}
      </div>
      <div class="tw-pane">
        <div class="tw-tabs"><span>内容处理</span></div>
        <div class="tw-main">
          <div class="listview">
            <div class="lv-inner">
              <div class="lv-row lv-head">
                <span>搜索词</span><span>所...</span><span>是否使用</span><span>文章标题</span><span>文章内容</span><span>关键词</span>
              </div>
              {#each rows as r}
                <div class="lv-row">
                  <span class="mono">{r[0]}</span><span class="mono">a...</span><span>未使用</span><span class="mono">{r[1]}</span><span class="mono">{r[2]}</span><span class="mono">{r[3]}</span>
                </div>
              {/each}
            </div>
            <div class="lv-sb"><i></i><span></span></div>
          </div>
          <div class="ops">
            <fieldset>
              <legend>操作区</legend>
              <div class="op-row"><label>所属网站:</label><div class="op-field blur"></div></div>
              <div class="op-row"><label>采集线程:</label><div class="op-field">10</div></div>
              <div class="op-row"><label>图片设置:</label><div class="op-field grey">内置图片</div></div>
            </fieldset>
          </div>
        </div>
        <div class="tw-count">总词数:8333 使用统计:78 入库统计:58</div>
      </div>
    </div>
    <div class="tw-status">無剑群站管理系统V</div>
  </section>

  <!-- floating window: task manager -->
  <section class="tm">
    <div class="tm-title">
      <span class="tm-icon">{@render icon('tm')}</span>
      <span>任务管理器</span>
      <span class="spacer"></span>
      <span class="tm-min"></span><span class="tm-max"></span>
    </div>
    <div class="tm-menu"><span>文件(F)</span><span>选项(O)</span><span>查看(V)</span></div>
    <div class="tm-tabs">
      {#each tmTabs as t}<span class:on={t[2] === 'on'} style="width:{t[1]}px">{t[0]}</span>{/each}
    </div>
    <div class="tm-cols">
      <div class="col c-name"><span class="lab">名称</span></div>
      <div class="col c-state"><span class="lab">状态</span></div>
      <div class="col c-num"><b>18%</b><span class="lab">CPU</span></div>
      <div class="col c-mem"><svg class="chev" viewBox="0 0 10 6" width="10" height="6"><path d="M1 1l4 4 4-4" fill="none" stroke="#4c607a"/></svg><b>29%</b><span class="lab">内存</span></div>
      <div class="col c-num"><b>1%</b><span class="lab">磁盘</span></div>
      <div class="col c-num"><b></b><span class="lab"></span></div>
    </div>
    <div class="tm-rows">
      {#each procs as p}
        <div class="tm-row" class:sel={p[10] === 'sel'}>
          <div class="pname">
            <span class="chevr">{#if p[1]}<svg viewBox="0 0 6 10" width="6" height="10"><path d="M1 1l4 4-4 4" fill="none" stroke="#999"/></svg>{/if}</span>
            <span class="p-ico">{@render icon(p[2])}</span>
            <span>{p[0]}</span>
          </div>
          <div class="pstate"></div>
          <div class="num" class:dark={p[7]}>{p[3]}</div>
          <div class="num dark">{p[4]}</div>
          <div class="num" class:dark={p[8]}>{p[5]}</div>
          <div class="num" class:dark={p[9]}>{p[6]}</div>
        </div>
      {/each}
    </div>
    <div class="tm-hs"><i></i><span></span></div>
    <div class="tm-foot">
      <svg viewBox="0 0 20 20" width="20" height="20"><circle cx="10" cy="10" r="9.500" fill="none" stroke="#aaa"/><path d="M5.500 11.500 10 7l4.500 4.500" fill="none" stroke="#aaa" stroke-width="1.200"/></svg>
      <span>简略信息(D)</span>
      <span class="spacer"></span>
      <span class="tm-end">结束任务(E)</span>
    </div>
  </section>

  <!-- annotations on top of the screenshot -->
  <div class="red-box"></div>
  <svg class="red-arrow" width="60" height="220" viewBox="0 0 60 220"><path d="M56 2 25.500 197 31 195 21.500 208 15 193 20 195z" fill="#f03a3a"/></svg>

  <div class="sogou">
    <span class="sogou-s">S</span>
    <div class="sogou-bar">
      <span>中</span><span class="moon">☽</span><span>°,</span>
      <svg viewBox="0 0 10 16" width="10" height="16"><rect x="2.500" y="0" width="5" height="10" rx="2.500" fill="#1565c0"/><path d="M1 7c0 6 8 6 8 0M5 12v4" fill="none" stroke="#1565c0"/></svg>
      <svg viewBox="0 0 14 14" width="14" height="14"><rect width="14" height="14" rx="1" fill="#1565c0"/><path d="M0 5h14M0 9h14M5 0v14M9 0v14" stroke="#fff"/></svg>
    </div>
  </div>
  <div class="watermark">
    <svg class="wm-c" viewBox="0 0 50 62" width="46" height="56"><path d="M42 2C18 6 4 18 4 34s14 26 34 26c-14-6-22-14-22-28S26 10 42 2z" fill="#2cd07a"/><path d="M25 32 41 15l5 4-14 21z" fill="#7a58d8"/><circle cx="28" cy="41" r="6" fill="#1c7fe0"/></svg>
    <span class="wm-text">DZ插件网</span>
    <span class="wm-sub"><i></i>DZ-X.NET<i></i></span>
  </div>
</div>

<style>
  :global(body) { margin: 0; background: #2d2d30; overflow: hidden; }

  .desktop {
    position: relative;
    width: 1920px;
    height: 1080px;
    overflow: hidden;
    font-family: "Open Sans", "Noto Sans CJK SC", sans-serif;
    font-size: 12px;
    color: #f1f1f1;
  }

  .spacer { flex: 1; }

  .vs { display: flex; flex-direction: column; height: 1050px; background: #2d2d30; }

  .titlebar { height: 33px; display: flex; align-items: center; padding-left: 12px; }
  .title-right { display: flex; align-items: center; margin-top: -6px; }
  .vs-logo { margin-right: 11px; }
  .title-text { color: #999; }
  .badge { background: #68217a; color: #eee; width: 14px; height: 16px; text-align: center; line-height: 16px; margin: 0 13px 0 1px; }
  .feedback { margin-right: 9px; }
  .quick {
    width: 199px; height: 23px; background: #333337; border: 1px solid #434346; color: #999;
    display: flex; align-items: center; justify-content: space-between; padding: 0 7px 0 5px; box-sizing: border-box;
    margin-right: 3px;
  }
  .win-ctl { width: 34px; text-align: center; color: #f1f1f1; font-size: 13px; position: relative; }
  .c-min { display: inline-block; width: 9px; height: 3px; background: #f1f1f1; vertical-align: -4px; }

  .menubar { height: 16px; display: flex; align-items: center; padding-left: 10px; padding-right: 8px; }
  .login { margin-right: 35px; }
  .avatar { width: 17px; height: 19px; background: #555; border: 1px solid #888; display: flex; justify-content: center; align-items: flex-end; }

  .toolbar { height: 39px; display: flex; align-items: center; padding-left: 18px; gap: 4px; box-sizing: border-box; padding-bottom: 4px; }
  .grip-v { width: 3px; height: 20px; background-image: radial-gradient(#555 30%, transparent 35%); background-size: 3px 3px; }
  .dn-s { width: 0; height: 0; border-left: 3px solid transparent; border-right: 3px solid transparent; border-top: 3px solid #999; margin: 0 2px; }
  .t-sep { width: 1px; height: 22px; background: #3f3f46; margin: 0 5px; }
  .t-sep2 { margin-left: 3px; }
  .combo {
    height: 23px; background: #333337; border: 1px solid #434346; box-sizing: border-box; margin-right: 2px;
    display: flex; align-items: center; justify-content: space-between; padding: 0 4px;
    color: #f1f1f1;
  }
  .combo i { width: 0; height: 0; border-left: 3px solid transparent; border-right: 3px solid transparent; border-top: 3px solid #999; }
  .c-debug { width: 65px; }
  .c-cpu { width: 110px; }
  .c-proj { width: 200px; }
  .play { width: 0; height: 0; border-left: 9px solid #75c069; border-top: 7px solid transparent; border-bottom: 7px solid transparent; margin-left: 6px; margin-right: 4px; }
  .over { color: #999; font-size: 9px; align-self: flex-end; margin-bottom: 3px; }

  .dock { height: 937px; display: flex; }

  .left-col { width: 170px; margin-left: 6px; height: 931px; flex: none; display: flex; flex-direction: column; }
  .toolbox {
    width: 170px; border: 1px solid #3f3f46;
    background: #252526; box-sizing: border-box; height: 909px; display: flex; flex-direction: column;
  }
  .bottom-tabs { height: 22px; display: flex; align-items: center; }
  .bottom-tabs span { padding: 0 6px; line-height: 22px; color: #d0d0d0; }
  .bottom-tabs .on { color: #0097fb; background: #252526; border: 1px solid #3f3f46; border-top: none; box-sizing: border-box; height: 22px; width: 48px; line-height: 20px; padding: 0 5px; }
  .panel-head { height: 23px; display: flex; align-items: center; padding: 0 5px 0 6px; gap: 8px; background: #2d2d30; flex: none; }
  .panel-title { color: #d0d0d0; font-size: 12.500px; white-space: nowrap; }
  .grip { flex: 1; height: 5px; background-image: radial-gradient(#4d4d52 40%, transparent 45%); background-size: 3px 3px; }
  .dn { width: 0; height: 0; border-left: 4px solid transparent; border-right: 4px solid transparent; border-top: 4px solid #f1f1f1; }
  .panel-x { font-size: 13px; color: #f1f1f1; width: 13px; }
  .search {
    height: 23px; flex: none; background: #333337; display: flex; align-items: center; padding-left: 5px;
    color: #999; border: 1px solid #3f3f46; box-sizing: border-box; margin: 0;
  }
  .search span { flex: 1; white-space: nowrap; }
  .search b { display: flex; width: 24px; }
  .general { height: 20px; margin: 3px 2px 0 2px; background: #3f3f46; display: flex; align-items: center; padding-left: 7px; gap: 5px; flex: none; }
  .tri { width: 0; height: 0; border-bottom: 7px solid #ccc; border-left: 7px solid transparent; }
  .empty { margin: 22px 10px 0 11px; line-height: 16.500px; color: #f1f1f1; text-align: center; font-size: 12px; }

  .center { width: 1438px; margin-left: 7px; display: flex; flex-direction: column; height: 931px; background: #252526; }
  .doc-tabs { height: 21px; flex: none; display: flex; background: #2d2d30; }
  .doc-tab { display: flex; align-items: center; padding-left: 5px; box-sizing: border-box; flex: none; position: relative; white-space: nowrap; }
  .doc-tab.active { background: #007acc; color: #fff; }
  .tab-pin { position: absolute; left: 56px; top: 3px; display: flex; }
  .tab-act { position: absolute; right: 6px; top: 2px; display: flex; gap: 10px; font-style: normal; }
  .mini-pin { font-size: 9px; }
  .tab-dn { align-self: center; margin-right: 3px; }
  .diag-bar { height: 27px; flex: none; border-top: 2px solid #007acc; display: flex; align-items: center; padding-left: 12px; background: #2d2d30; gap: 5px; }
  .diag-bar .t-sep { margin: 0 2px; }
  .stop { width: 10px; height: 10px; background: #a1260d; border: 1px solid #d0d0d0; box-sizing: border-box; margin-right: 3px; }
  .mr { margin-right: 2px; }
  .mr2 { margin-right: 3px; }
  .disabled { color: #6d6d6d; }
  .session { height: 20px; flex: none; font-weight: 700; padding-left: 11px; line-height: 18px; }
  .ruler { height: 24px; flex: none; position: relative; border-top: 1px solid #5a5a5a; border-bottom: 1px solid #5a5a5a; box-sizing: border-box; }
  .ruler-ticks { position: absolute; left: 0; top: 0; }
  .time { position: absolute; top: -1px; }
  .cpu-head { height: 19px; flex: none; font-weight: 700; display: flex; align-items: center; gap: 4px; padding-left: 6px; }
  .chart-row { display: flex; height: 70px; flex: none; }
  .axis { display: flex; flex-direction: column; justify-content: space-between; font-size: 13px; }
  .axis.left { width: 37px; text-align: right; padding-right: 5px; box-sizing: border-box; }
  .axis.right { padding-left: 6px; }
  .axis span { line-height: 16px; margin-top: -1px; }
  .plot { width: 1365px; height: 70px; border: 1px solid #5a5a5a; box-sizing: border-box; overflow: hidden; }
  .plot svg { display: block; margin-left: -1px; }
  .chart-gap { height: 19px; flex: none; }
  .graph-tabs { height: 50px; flex: none; background: #3a3a3d; padding: 6px 0 0 7px; box-sizing: border-box; }
  .graph-tab { display: block; width: 132px; height: 40px; border: 1px solid #3399ff; box-sizing: border-box; }
  .doc-fill { flex: 1; }
  .doc-scroll { height: 18px; flex: none; background: #3e3e42; display: flex; align-items: center; padding: 0 3px 0 4px; }
  .arr-l { width: 0; height: 0; border-right: 4px solid #777; border-top: 5px solid transparent; border-bottom: 5px solid transparent; }
  .arr-r { width: 0; height: 0; border-left: 4px solid #777; border-top: 5px solid transparent; border-bottom: 5px solid transparent; }

  .explorer {
    width: 260px; margin-left: 7px; background: #252526; border: 1px solid #3f3f46; box-sizing: border-box;
    height: 930px; display: flex; flex-direction: column;
  }
  .ex-tools { height: 29px; flex: none; background: #2d2d30; display: flex; align-items: center; padding-left: 9px; gap: 8px; }
  .ex-tools .gap { margin-left: 2px; }
  .ex-search { margin-bottom: 2px; }
  .ex-body { flex: 1; display: flex; min-height: 0; }
  .ex-tree { flex: 1; padding-top: 2px; }
  .ex-row { height: 19px; display: flex; align-items: center; white-space: nowrap; position: relative; }
  .ex-row.root { padding-left: 13px; gap: 5px; }
  .arrow { width: 20px; margin-left: 11px; display: flex; flex: none; }
  .arrow .open { width: 0; height: 0; border-left: 5px solid #bbb; border-top: 5px solid transparent; border-bottom: 5px solid transparent; position: relative; }
  .arrow .down { width: 0; height: 0; border-bottom: 6px solid #ddd; border-left: 6px solid transparent; }
  .ex-row.deep .arrow { margin-left: 29px; }
  .ex-row.sel { background: #3f3f46; font-weight: 700; }
  .ex-ico { width: 20px; display: flex; align-items: center; flex: none; }
  .proj { width: 13px; height: 11px; border: 1px solid #7ec67a; color: #ddd; font-size: 7px; line-height: 11px; text-align: center; }
  .cs { color: #7ec67a; font-size: 9px; font-weight: 700; }
  .ex-sb { width: 17px; background: #3e3e42; flex: none; display: flex; flex-direction: column; align-items: center; }
  .ex-sb .up { margin-top: 6px; width: 0; height: 0; border-left: 5px solid transparent; border-right: 5px solid transparent; border-bottom: 5px solid #999; }
  .ex-sb .thumb { width: 9px; height: 246px; margin-top: 4px; background: #686868; }

  .strip { width: 29px; flex: none; position: relative; }
  .strip span { position: absolute; left: 8px; top: 0; writing-mode: vertical-rl; font-weight: 700; font-size: 11px; color: #c8c8c8; }

  .statusbar { height: 25px; background: #007acc; display: flex; align-items: center; color: #fff; padding-left: 5px; }
  .status-box { width: 10px; height: 12px; border: 1px solid #fff; box-sizing: border-box; transform: skewX(-10deg); margin-right: 9px; }
  .up-arrow { font-size: 14px; margin-right: 7px; }
  .stat-num { margin-right: 316px; }
  .master { position: absolute; left: 1846px; top: 1029px; color: #fff; opacity: .9; }

  .taskbar { height: 30px; background: #2b2e30; display: flex; align-items: center; position: relative; }
  .winlogo { margin-left: 10px; }
  .tb-search { margin-left: 19px; margin-right: 14px; }
  .task-btn {
    width: 123px; height: 28px; margin-right: 2.300px; background: #565a5c; border: 1px solid #686c6e; box-sizing: border-box;
    display: flex; align-items: center; padding-left: 8px; gap: 4px; color: #fff; white-space: nowrap; overflow: hidden;
  }
  .task-btn.on { background: #7d8081; border-color: #d8d8d8; }
  .task-ico { width: 18px; height: 20px; display: flex; align-items: center; flex: none; }
  .tray { display: flex; align-items: center; position: absolute; left: 1592px; top: 0; height: 30px; }
  .tray-i { width: 24px; display: flex; justify-content: center; align-items: center; }
  .tray-zh { color: #fff; font-size: 14px; }
  .tray-s { width: 16px; height: 18px; background: #e8501f; color: #fff; font-weight: 700; text-align: center; line-height: 18px; font-size: 13px; border-radius: 2px; }
  .clock { margin-left: 14px; color: #fff; }

  .tool-win {
    position: absolute; left: 140px; top: 301px; width: 1423px; height: 665px;
    background: #f0f0f0; color: #111; display: flex; flex-direction: column;
    box-shadow: 0 0 6px rgba(0,0,0,.5);
  }
  .tw-title { height: 30px; background: #fff; display: flex; align-items: center; padding-left: 8px; flex: none; }
  .tw-icon { width: 16px; height: 16px; margin-right: 4px; }
  .tw-name { color: #9a9a9a; width: 120px; }
  .tw-vip { color: #9a9a9a; width: 207px; }
  .tw-days { color: #9a9a9a; }
  .tw-ctl { width: 46px; height: 30px; display: flex; align-items: center; justify-content: center; position: relative; color: #777; }
  .tw-ctl.min::after { content: ""; width: 10px; height: 1px; background: #777; }
  .tw-ctl.max::after { content: ""; width: 9px; height: 9px; border: 1px solid #777; }
  .tw-ctl.x { font-size: 13px; }
  .tw-menu { height: 25px; background: #f5f5f5; display: flex; align-items: center; padding-left: 15px; flex: none; }
  .tw-menu span { white-space: nowrap; color: #222; }
  .tw-body { height: 587px; flex: none; display: flex; }
  .tree { width: 121px; height: 587px; flex: none; box-sizing: border-box; border: 1px solid #a0a0a8; border-left: none; padding: 2px 0 0 11px; background: #f0f0f0; }
  .tree-row { height: 14px; display: flex; align-items: center; line-height: 14px; color: #111; }
  .tree-row.child { padding-left: 13px; }
  .box { width: 8px; height: 8px; border: 1px solid #888; box-sizing: border-box; position: relative; background: #fff; flex: none; }
  .box::before { content: ""; position: absolute; left: 1px; top: 2px; width: 4px; height: 1px; background: #222; }
  .box.plus::after { content: ""; position: absolute; left: 2.500px; top: 1px; width: 1px; height: 4px; background: #222; }
  .dot { width: 6px; border-top: 1px dotted #888; margin-right: 1px; flex: none; }
  .dot.long { width: 20px; }
  .tw-pane { flex: 1; padding-left: 7px; display: flex; flex-direction: column; min-width: 0; }
  .tw-tabs { height: 22px; flex: none; border-bottom: 1px solid #a0a0a8; box-sizing: border-box; }
  .tw-tabs span { display: inline-block; width: 69px; height: 21px; background: #fff; border: 1px solid #d0d0d0; border-bottom: none; text-align: center; line-height: 21px; box-sizing: border-box; }
  .tw-main { display: flex; height: 533px; flex: none; }
  .listview { width: 935px; background: #fff; border: 1px solid #828790; box-sizing: border-box; display: flex; margin-left: 3px; flex: none; }
  .lv-inner { flex: 1; overflow: hidden; }
  .lv-row {
    display: grid; grid-template-columns: 91.500px 32.500px 60px 201px 283px 200px;
    height: 16px; align-items: center; white-space: nowrap; color: #111;
  }
  .lv-row span { padding-left: 7px; overflow: hidden; line-height: 16px; }
  .lv-head { height: 26px; }
  .lv-head span { border-right: 1px solid #e5e5e5; height: 26px; line-height: 26px; box-sizing: border-box; }
  .mono { font-family: "Liberation Mono", monospace; font-size: 10px; }
  .lv-sb { width: 17px; background: #f0f0f0; margin-right: 1px; flex: none; display: flex; flex-direction: column; align-items: center; }
  .lv-sb i { width: 6px; height: 6px; border-left: 1px solid #606060; border-top: 1px solid #606060; transform: rotate(45deg); margin: 9px 0 4px; }
  .lv-sb span { width: 17px; flex: 1; background: #cdcdcd; }
  .ops { flex: 1; padding: 0 0 0 5px; }
  fieldset { border: 1px solid #d5d5d5; padding: 0 0 0 1px; margin: 0; height: 300px; }
  legend { padding: 0 2px; margin-left: 0; color: #222; font-size: 12px; line-height: 13px; }
  .op-row { display: flex; align-items: center; height: 26.500px; }
  .op-row label { width: 51px; flex: none; white-space: nowrap; font-size: 12px; }
  .op-field { width: 270px; height: 20px; background: #f0f0f0; border: 1px solid #bbb; box-sizing: border-box; line-height: 18px; padding-left: 3px; }
  .op-field.blur { background: linear-gradient(90deg, #dcdcdc, #d0d0d0 40%, #dadada); border-color: #d5d5d5; }
  .op-field.grey { background: #cfcfcf; color: #777; border-color: #d0d0d0; }
  .tw-count { margin-top: 4px; margin-left: 3px; border-top: 1px solid #d5d5d5; height: 22px; flex: none; line-height: 22px; padding-left: 4px; color: #222; box-shadow: 0 3px 0 #fff; width: 935px; }
  .tw-status { flex: 1; border-top: 1px solid #c8c8c8; padding-left: 883px; line-height: 23px; white-space: nowrap; overflow: hidden; color: #222; }

  .tm {
    position: absolute; left: 1127px; top: 475px; width: 793px; height: 515px;
    background: #fff; color: #222; border: 1px solid #5d5d5d; border-right: none; box-sizing: border-box;
    display: flex; flex-direction: column; overflow: hidden;
  }
  .tm-title { height: 27px; display: flex; align-items: center; padding-left: 8px; flex: none; gap: 5px; }
  .tm-min { width: 12px; height: 1px; background: #222; margin-right: 29px; }
  .tm-max { width: 11px; height: 11px; border: 1px solid #222; margin-right: -8px; }
  .tm-menu { height: 20px; flex: none; display: flex; align-items: center; padding-left: 7px; gap: 16px; border-bottom: 2px solid #f0f0f0; }
  .tm-tabs { height: 28px; flex: none; box-sizing: border-box; display: flex; align-items: flex-end; border-bottom: 1px solid #d9d9d9; padding-top: 4px; }
  .tm-tabs span { height: 24px; line-height: 24px; background: #f0f0f0; border: 1px solid #d9d9d9; border-left: none; border-bottom: none; box-sizing: border-box; text-align: center; flex: none; color: #333; }
  .tm-tabs span.on { background: #fff; height: 25px; margin-bottom: -1px; color: #222; }
  .tm-cols { height: 43px; flex: none; margin-top: 11px; display: grid; grid-template-columns: 234px 120px 73px 255px 73px 73px; border-bottom: 2px solid #b5b5b5; }
  .col { border-left: 1px solid #d9d9d9; text-align: right; padding-right: 7px; box-sizing: border-box; display: flex; flex-direction: column; justify-content: flex-end; position: relative; }
  .col b { font-weight: 400; font-size: 18px; color: #333; line-height: 22px; }
  .lab { color: #4c607a; font-size: 12px; line-height: 18px; padding-bottom: 2px; }
  .c-name { border-left: none; text-align: left; padding-left: 7px; }
  .c-state { text-align: left; padding-left: 6px; }
  .chev { position: absolute; left: 9px; top: 1px; }
  .tm-rows { height: 316px; flex: none; overflow: hidden; }
  .tm-row { height: 28px; display: grid; grid-template-columns: 234px 120px 73px 255px 73px 73px; white-space: nowrap; }
  .pname { display: flex; align-items: center; overflow: hidden; font-size: 12.500px; }
  .chevr { width: 29px; padding-left: 11px; box-sizing: border-box; display: flex; flex: none; }
  .p-ico { width: 22px; display: flex; flex: none; align-items: center; }
  .num { background: #fff4c4; text-align: right; padding-right: 7px; line-height: 28px; box-shadow: inset 1px 0 0 #f0e5b0; font-size: 12.500px; }
  .num.dark { background: #f9eba5; }
  .tm-row.sel { background: #cce8ff; }
  .tm-row.sel .num { background: #d6e8e8; }
  .tm-hs { height: 16px; flex: none; background: #f0f0f0; display: flex; align-items: center; border-bottom: 1px solid #a8a8a8; }
  .tm-hs i { width: 5px; height: 5px; border-left: 1px solid #555; border-bottom: 1px solid #555; transform: rotate(45deg); margin-left: 7px; }
  .tm-hs span { width: 527px; height: 16px; background: #cdcdcd; margin-left: 9px; }
  .tm-foot { flex: 1; display: flex; align-items: center; padding-left: 8px; gap: 6px; }
  .tm-end { width: 100px; height: 21px; background: #e1e1e1; border: 1px solid #adadad; box-sizing: border-box; line-height: 19px; padding-left: 6px; margin-right: -82px; white-space: nowrap; flex: none; }

  .red-box { position: absolute; left: 1136px; top: 724px; width: 681px; height: 22px; border: 3px solid #f33838; box-sizing: border-box; }
  .red-arrow { position: absolute; left: 1570px; top: 520px; }

  .sogou { position: absolute; left: 1606px; top: 1020px; height: 34px; display: flex; align-items: center; }
  .sogou-s { width: 25px; height: 30px; background: #e8501f; color: #fff; font-weight: 700; font-size: 24px; text-align: center; line-height: 30px; transform: rotate(-12deg); border-radius: 3px; z-index: 1; }
  .sogou-bar { background: #fff; width: 150px; height: 19px; display: flex; align-items: center; gap: 9px; padding-left: 8px; color: #1565c0; font-weight: 700; font-size: 14px; }
  .moon { font-size: 12px; }
  .watermark { position: absolute; left: 1720px; top: 1014px; width: 200px; height: 66px; }
  .wm-c { position: absolute; left: 0; top: 2px; }
  .wm-text { position: absolute; left: 52px; top: 0; font-size: 28px; font-family: "Noto Sans CJK SC", sans-serif; color: rgba(50, 205, 120, .72); white-space: nowrap; font-weight: 300; letter-spacing: 1px; }
  .wm-sub { position: absolute; left: 55px; top: 36px; width: 126px; display: flex; align-items: center; gap: 3px; font-size: 8px; color: #8a7ad8; }
  .wm-sub i { flex: 1; height: 1px; background: #7a58d8; }
</style>
